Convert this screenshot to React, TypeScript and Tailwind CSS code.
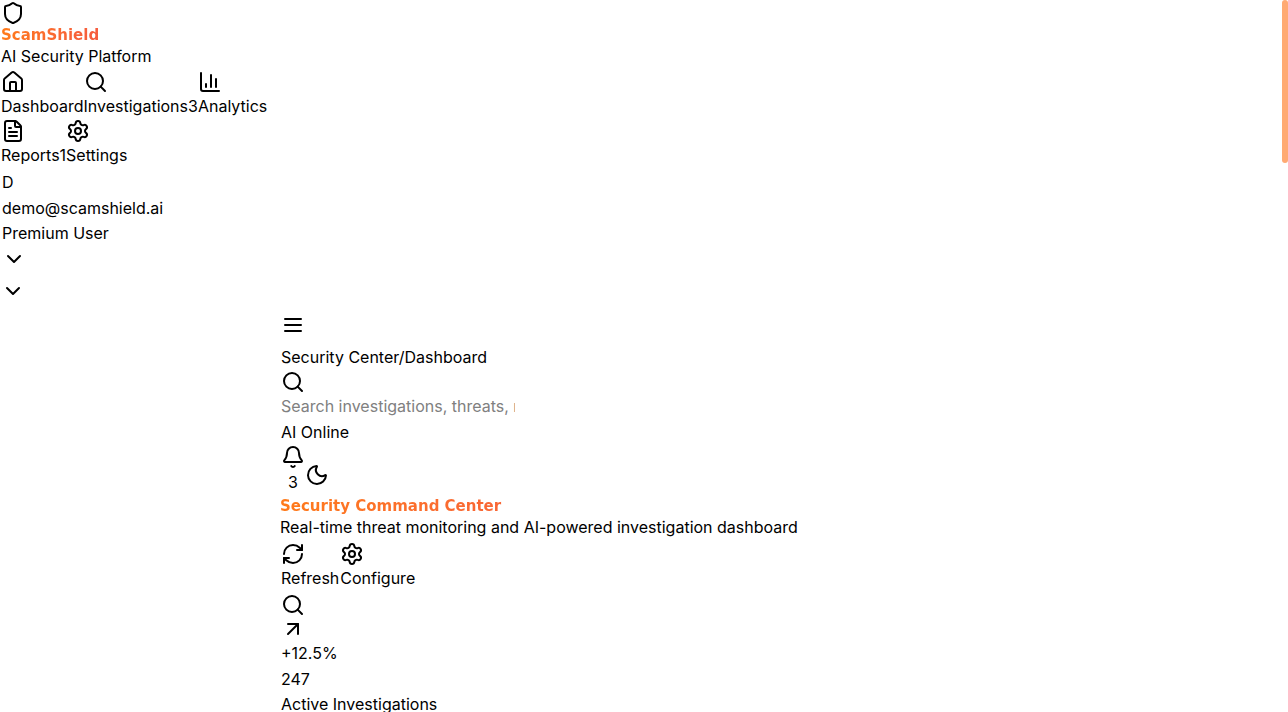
import type { ReactNode } from 'react';
import {
  ArrowUpRight,
  Bell,
  ChartColumn,
  ChevronDown,
  FileText,
  House,
  Moon,
  RefreshCw,
  Search,
  Settings,
  Shield,
} from 'lucide-react';

const brandText =
  "bg-linear-to-r from-[#ff7a18] to-[#f04848] bg-clip-text pt-0.5 font-['DejaVu_Sans',sans-serif] text-[15px] font-bold text-transparent";

function MenuIcon() {
  return (
    <svg
      width="24"
      height="24"
      viewBox="0 0 24 24"
      fill="none"
      stroke="currentColor"
      strokeWidth="2"
      strokeLinecap="round"
      aria-hidden="true"
    >
      <path d="M4 6h16M4 12h16M4 18h16" />
    </svg>
  );
}

function NavItem({ icon, label, badge }: { icon: ReactNode; label: string; badge?: number }) {
  return (
    <a href="#" className="flex flex-col items-start">
      {icon}
      <span className="flex leading-[25px]">
        <span>{label}</span>
        {badge !== undefined && <span>{badge}</span>}
      </span>
    </a>
  );
}

function ActionButton({ icon, label }: { icon: ReactNode; label: string }) {
  return (
    <button type="button" className="flex flex-col items-start pr-px">
      {icon}
      <span className="leading-[25px]">{label}</span>
    </button>
  );
}

function Sidebar() {
  return (
    <aside className="flex flex-col items-start pt-px pl-px">
      <Shield size={24} />
      <div>
        <h1 className={`leading-[16px] ${brandText}`}>ScamShield</h1>
        <p className="leading-[26px]">AI Security Platform</p>
      </div>
      <nav className="pt-px">
        <div className="flex">
          <NavItem icon={<House size={24} />} label="Dashboard" />
          <NavItem icon={<Search size={24} />} label="Investigations" badge={3} />
          <NavItem icon={<ChartColumn size={24} />} label="Analytics" />
        </div>
        <div className="flex">
          <NavItem icon={<FileText size={24} />} label="Reports" badge={1} />
          <NavItem icon={<Settings size={24} />} label="Settings" />
        </div>
      </nav>
      <button type="button" className="flex flex-col items-start pt-px pl-px text-left leading-[26px]">
        <span>D</span>
        <span>demo@scamshield.ai</span>
        <span className="pb-px leading-[25px]">Premium User</span>
        <ChevronDown size={24} />
      </button>
      <button type="button" aria-label="Collapse sidebar" className="pt-2">
        <ChevronDown size={24} />
      </button>
    </aside>
  );
}

function TopBar() {
  return (
    <header className="flex flex-col items-start pl-px">
      <button type="button" aria-label="Toggle menu" className="pb-2">
        <MenuIcon />
      </button>
      <div className="leading-[25px]">Security Center/Dashboard</div>
      <label htmlFor="search" aria-label="Search">
        <Search size={24} />
      </label>
      <input
        id="search"
        type="text"
        placeholder="Search investigations, threats, reports..."
        className="mb-px h-6 w-[234px] placeholder:text-[#808080]"
      />
      <span className="leading-[26px]">AI Online</span>
      <div className="flex items-center">
        <button type="button" aria-label="Notifications" className="flex flex-col items-center">
          <Bell size={24} />
          <span className="leading-[26px]">3</span>
        </button>
        <button type="button" aria-label="Toggle theme" className="pt-2.5">
          <Moon size={24} />
        </button>
      </div>
    </header>
  );
}

function Dashboard() {
  return (
    <main>
      <div className="w-fit">
        <h2 className={`leading-[18px] ${brandText}`}>Security Command Center</h2>
        <p className="leading-[25px]">Real-time threat monitoring and AI-powered investigation dashboard</p>
      </div>
      <div className="flex pt-0.5 pl-px">
        <ActionButton icon={<RefreshCw size={24} />} label="Refresh" />
        <ActionButton icon={<Settings size={24} />} label="Configure" />
      </div>
      <section className="flex flex-col pt-0.5 pl-px leading-[25px]">
        <Search size={24} />
        <ArrowUpRight size={24} />
        <span>+12.5%</span>
        <span className="pt-px">247</span>
        <span>Active Investigations</span>
      </section>
    </main>
  );
}

export default function App() {
  return (
    <div className="flex h-screen overflow-hidden bg-white font-[Inter,sans-serif] text-base text-black antialiased">
      <div className="min-w-0 grow">
        <Sidebar />
        <div className="pt-2.5 pl-[280px]">
          <TopBar />
          <Dashboard />
        </div>
      </div>
      <div aria-hidden="true" className="h-[163px] w-1.5 shrink-0 rounded-full bg-[#ffaa73]" />
    </div>
  );
}
